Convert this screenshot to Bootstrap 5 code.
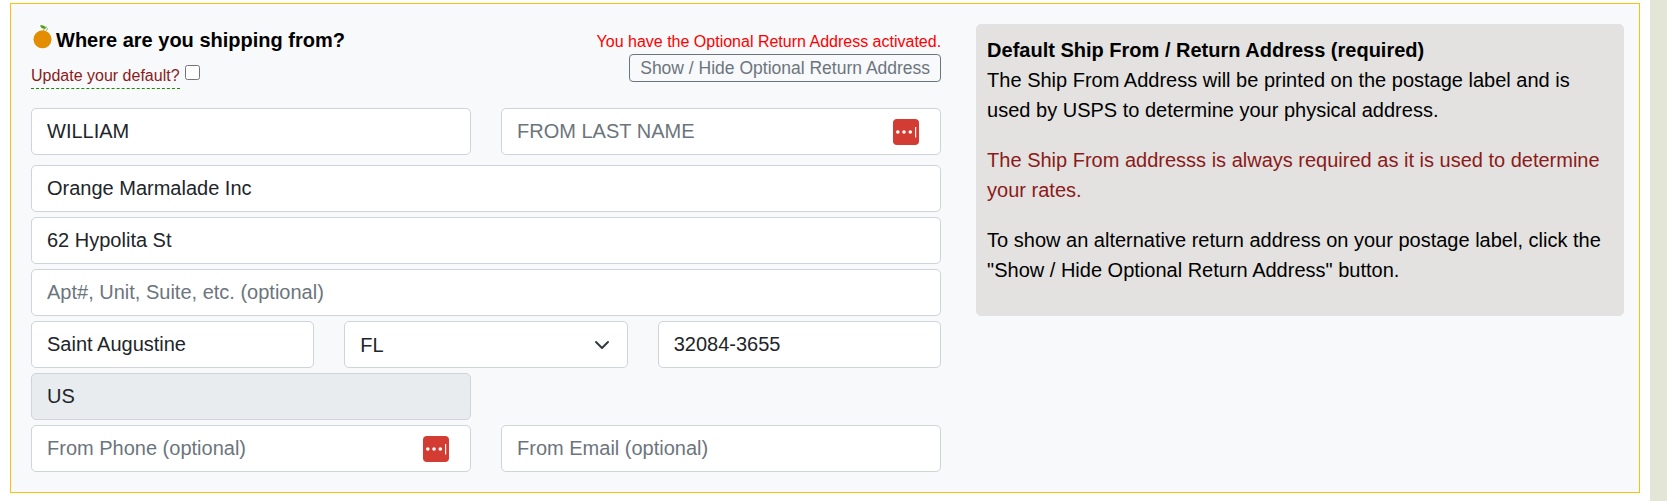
<!DOCTYPE html>
<html lang="en">
<head>
<meta charset="utf-8">
<meta name="viewport" content="width=device-width, initial-scale=1">
<title>Ship from address</title>
<link href="https://cdn.jsdelivr.net/npm/bootstrap@5.3.0/dist/css/bootstrap.min.css" rel="stylesheet">
<style>
  html { font-size: 20px; }
  body { font-family: "Liberation Sans", Arial, sans-serif; line-height: 30px; color: #000; background: #e3e5d7; }
  .page-sheet { margin-right: 17px; padding: 3px 10px 8px; min-height: 100vh; }
  .ship-panel { background: #f8f9fb; border: 1px solid #ffc107; padding: 20px 15px 20px 20px; }
  .ship-grid { display: grid; gap: 35px; align-items: start; }
  @media (min-width: 992px) { .ship-grid { grid-template-columns: minmax(0, 59fr) minmax(0, 42fr); } }
  .form-head { min-height: 84px; }
  .form-title { font-size: 20px; line-height: 32px; font-weight: 700; margin: 0; }
  .text-note { font-size: 16px; line-height: 25px; }
  .default-label { color: #8b1a1a; border-bottom: 1px dashed #1e8a00; padding-top: 2px; }
  .tick { width: 15px; height: 15px; margin: 4px 0 0; }
  .activated { color: #f00; }
  .btn-toggle { line-height: 26px; color: #6c757d; border-color: #6c757d; border-radius: 4px; }
  .field-stack { --bs-gutter-x: 30px; row-gap: 5px; }
  .field-stack .form-control, .field-stack .form-select { font-size: 20px; line-height: 30px; height: 47px; padding: 7px 15px; border: 1px solid #ced4da; border-radius: 5px; color: #212529; }
  .field-stack .form-control::placeholder { color: #6c757d; }
  .field-stack .form-select { background-size: 16px 16px; background-position: right 17px center; }
  .field-stack .form-control:disabled { background: #e9ecef; opacity: 1; }
  .key-btn { right: 22px; line-height: 0; }
  .note-box { background: #e3e2e0; border: 1px solid #e0e2e5; border-radius: 5px; padding: 10px; }
  .note-box p { margin-bottom: 20px; }
  .required-note { color: #8b1a1a; }
</style>
</head>
<body>
<main class="page-sheet bg-white">
  <section class="ship-panel">
    <div class="ship-grid">
      <form>
        <div class="form-head d-flex justify-content-between align-items-start">
          <div>
            <h2 class="form-title d-flex align-items-start">
              <svg width="25" height="26" viewBox="0 0 25 26" aria-hidden="true">
                <circle cx="11.500" cy="15.300" r="9" fill="#e38d00"/>
                <path d="M9 1.500C11 .8 14.500 1.500 15 4.500 12 5.500 10 4 9 1.500Z" fill="#4f9d1c"/>
                <path d="M12.500 6.500 14 3.500 16 3M16.500 4.500 15.500 6.500" fill="none" stroke="#7aac4c" stroke-width="1"/>
              </svg>
              <span>Where are you shipping from?</span>
            </h2>
            <div class="d-flex gap-1 pt-1 text-note">
              <label class="default-label" for="updateDefault">Update your default?</label>
              <input class="tick" type="checkbox" id="updateDefault">
            </div>
          </div>
          <div class="text-end pt-1">
            <div class="text-note activated">You have the Optional Return Address activated.</div>
            <button type="button" class="btn btn-sm btn-outline-secondary btn-toggle py-0 d-block ms-auto">Show / Hide Optional Return Address</button>
          </div>
        </div>
        <div class="row field-stack">
          <div class="col-6 mb-1"><input class="form-control" type="text" aria-label="First name" value="WILLIAM"></div>
          <div class="col-6 mb-1">
            <div class="position-relative">
              <input class="form-control" type="text" aria-label="Last name" placeholder="FROM LAST NAME">
              <button type="button" class="key-btn btn p-0 border-0 position-absolute top-50 translate-middle-y" aria-label="Fill last name">
                <svg width="26" height="26" viewBox="0 0 26 26"><rect width="26" height="26" rx="4" fill="#d23c32"/><g fill="#fff"><circle cx="4.800" cy="13" r="1.800"/><circle cx="11" cy="13" r="1.800"/><circle cx="17.300" cy="13" r="1.800"/><rect x="22" y="8" width="1.200" height="10.500"/></g></svg>
              </button>
            </div>
          </div>
          <div class="col-12"><input class="form-control" type="text" aria-label="Company" value="Orange Marmalade Inc"></div>
          <div class="col-12"><input class="form-control" type="text" aria-label="Street address" value="62 Hypolita St"></div>
          <div class="col-12"><input class="form-control" type="text" aria-label="Apartment" placeholder="Apt#, Unit, Suite, etc. (optional)"></div>
          <div class="col-4"><input class="form-control" type="text" aria-label="City" value="Saint Augustine"></div>
          <div class="col-4"><select class="form-select" aria-label="State"><option>FL</option></select></div>
          <div class="col-4"><input class="form-control" type="text" aria-label="ZIP code" value="32084-3655"></div>
          <div class="col-6 me-auto"><input class="form-control" type="text" aria-label="Country" value="US" disabled></div>
          <div class="w-100 m-0 p-0 d-none"></div>
          <div class="col-6"></div>
          <div class="col-6">
            <div class="position-relative">
              <input class="form-control" type="tel" aria-label="Phone" placeholder="From Phone (optional)">
              <button type="button" class="key-btn btn p-0 border-0 position-absolute top-50 translate-middle-y" aria-label="Fill phone">
                <svg width="26" height="26" viewBox="0 0 26 26"><rect width="26" height="26" rx="4" fill="#d23c32"/><g fill="#fff"><circle cx="4.800" cy="13" r="1.800"/><circle cx="11" cy="13" r="1.800"/><circle cx="17.300" cy="13" r="1.800"/><rect x="22" y="8" width="1.200" height="10.500"/></g></svg>
              </button>
            </div>
          </div>
          <div class="col-6"><input class="form-control" type="email" aria-label="Email" placeholder="From Email (optional)"></div>
        </div>
      </form>
      <aside class="note-box">
        <strong>Default Ship From / Return Address (required)</strong>
        <p>The Ship From Address will be printed on the postage label and is used by USPS to determine your physical address.</p>
        <p class="required-note">The Ship From addresss is always required as it is used to determine your rates.</p>
        <p>To show an alternative return address on your postage label, click the "Show / Hide Optional Return Address" button.</p>
      </aside>
    </div>
  </section>
</main>
<script src="https://cdn.jsdelivr.net/npm/bootstrap@5.3.0/dist/js/bootstrap.bundle.min.js"></script>
</body>
</html>
